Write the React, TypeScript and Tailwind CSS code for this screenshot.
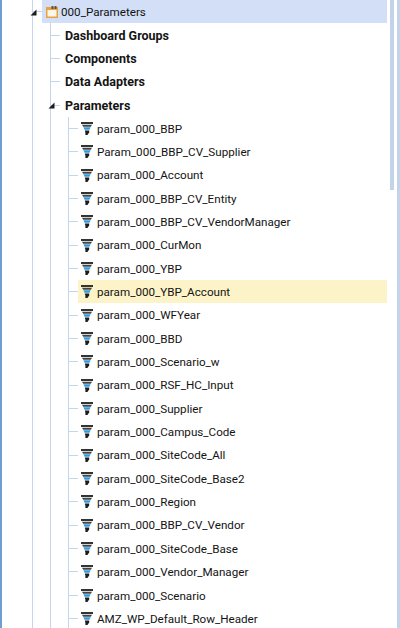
import React from 'react';

const params = [
  'param_000_BBP',
  'Param_000_BBP_CV_Supplier',
  'param_000_Account',
  'param_000_BBP_CV_Entity',
  'param_000_BBP_CV_VendorManager',
  'param_000_CurMon',
  'param_000_YBP',
  'param_000_YBP_Account',
  'param_000_WFYear',
  'param_000_BBD',
  'param_000_Scenario_w',
  'param_000_RSF_HC_Input',
  'param_000_Supplier',
  'param_000_Campus_Code',
  'param_000_SiteCode_All',
  'param_000_SiteCode_Base2',
  'param_000_Region',
  'param_000_BBP_CV_Vendor',
  'param_000_SiteCode_Base',
  'param_000_Vendor_Manager',
  'param_000_Scenario',
  'AMZ_WP_Default_Row_Header',
];

const groups = ['Dashboard Groups', 'Components', 'Data Adapters'];

const Expander = () => (
  <svg width="7" height="7" viewBox="0 0 7 7" className="absolute left-[-3px] top-[9px]">
    <path d="M6.5 0.5V6.5H0.5Z" fill="#1c1c1c" />
  </svg>
);

const FilterIcon = () => (
  <svg width="12" height="13" viewBox="0 0 12 13" className="shrink-0">
    <path d="M0 0H12V2H0Z" fill="#333333" />
    <path d="M1 2.8H11L9.8 4.8H2.2Z" fill="#444444" />
    <path d="M2.4 5.2H9.6L8.4 7.8H3.6Z" fill="#2f9ae0" />
    <path d="M3.8 8.4H8.2V10.4L6.4 13H4.4V10.4Z" fill="#1c1c1c" />
  </svg>
);

const CalendarIcon = () => (
  <svg width="12" height="12" viewBox="0 0 12 12" className="shrink-0">
    <rect x="0.75" y="1.75" width="10.5" height="9.5" fill="#fdf6e8" stroke="#e8a33d" strokeWidth="1.5" />
    <rect x="0" y="1" width="12" height="3" fill="#e8a33d" />
    <rect x="5.5" y="0" width="2" height="3" fill="#555555" />
    <rect x="8.5" y="0" width="2" height="3" fill="#555555" />
  </svg>
);

const Tick = ({ width }: { width: string }) => <div className={`${width} h-px bg-[#c5d5ee] shrink-0`} />;

const App: React.FC = () => {
  return (
    <div className="flex h-[628px] w-[400px] overflow-hidden bg-white text-[11.65px] text-[#141414] [font-family:Roboto,'Noto_Sans',sans-serif]">
      <div className="w-[2px] shrink-0 bg-[#6f9fd0]" />
      <div className="ml-[30px] flex-1 min-w-0 border-l border-[#c5d5ee] h-[700px]">
        <div className="relative flex h-[23.35px] items-center">
          <Expander />
          <Tick width="w-[9px]" />
          <div className="flex h-full flex-1 items-center gap-[3px] bg-[#d2dff6] pl-[4px]">
            <CalendarIcon />
            <span className="pt-[2px]">000_Parameters</span>
          </div>
        </div>
        <div className="ml-[17px] border-l border-[#c5d5ee] h-[700px]">
          {groups.map((g) => (
            <div key={g} className="flex h-[23.35px] items-center">
              <Tick width="w-[9px]" />
              <span className="ml-[5px] pt-[2px] text-[12.5px] font-bold">{g}</span>
            </div>
          ))}
          <div className="relative flex h-[23.35px] items-center">
            <Expander />
            <Tick width="w-[9px]" />
            <span className="ml-[5px] pt-[2px] text-[12.5px] font-bold">Parameters</span>
          </div>
          <div className="ml-[17px] border-l border-[#c5d5ee]">
            {params.map((p) => (
              <div key={p} className="flex h-[23.35px] items-center">
                <Tick width="w-[9px]" />
                <div
                  className={
                    p === 'param_000_YBP_Account'
                      ? 'flex h-full flex-1 items-center gap-[4px] bg-[#fdf3c8] pl-[3px]'
                      : 'flex h-full flex-1 items-center gap-[4px] pl-[3px]'
                  }
                >
                  <FilterIcon />
                  <span className="pt-[2px]">{p}</span>
                </div>
              </div>
            ))}
          </div>
        </div>
      </div>
      <div className="ml-[3px] w-[4px] h-[190px] shrink-0 bg-[#c3d3ea]" />
      <div className="ml-[3px] w-[3px] shrink-0 bg-[#c3d3ea]" />
    </div>
  );
};

export default App;
